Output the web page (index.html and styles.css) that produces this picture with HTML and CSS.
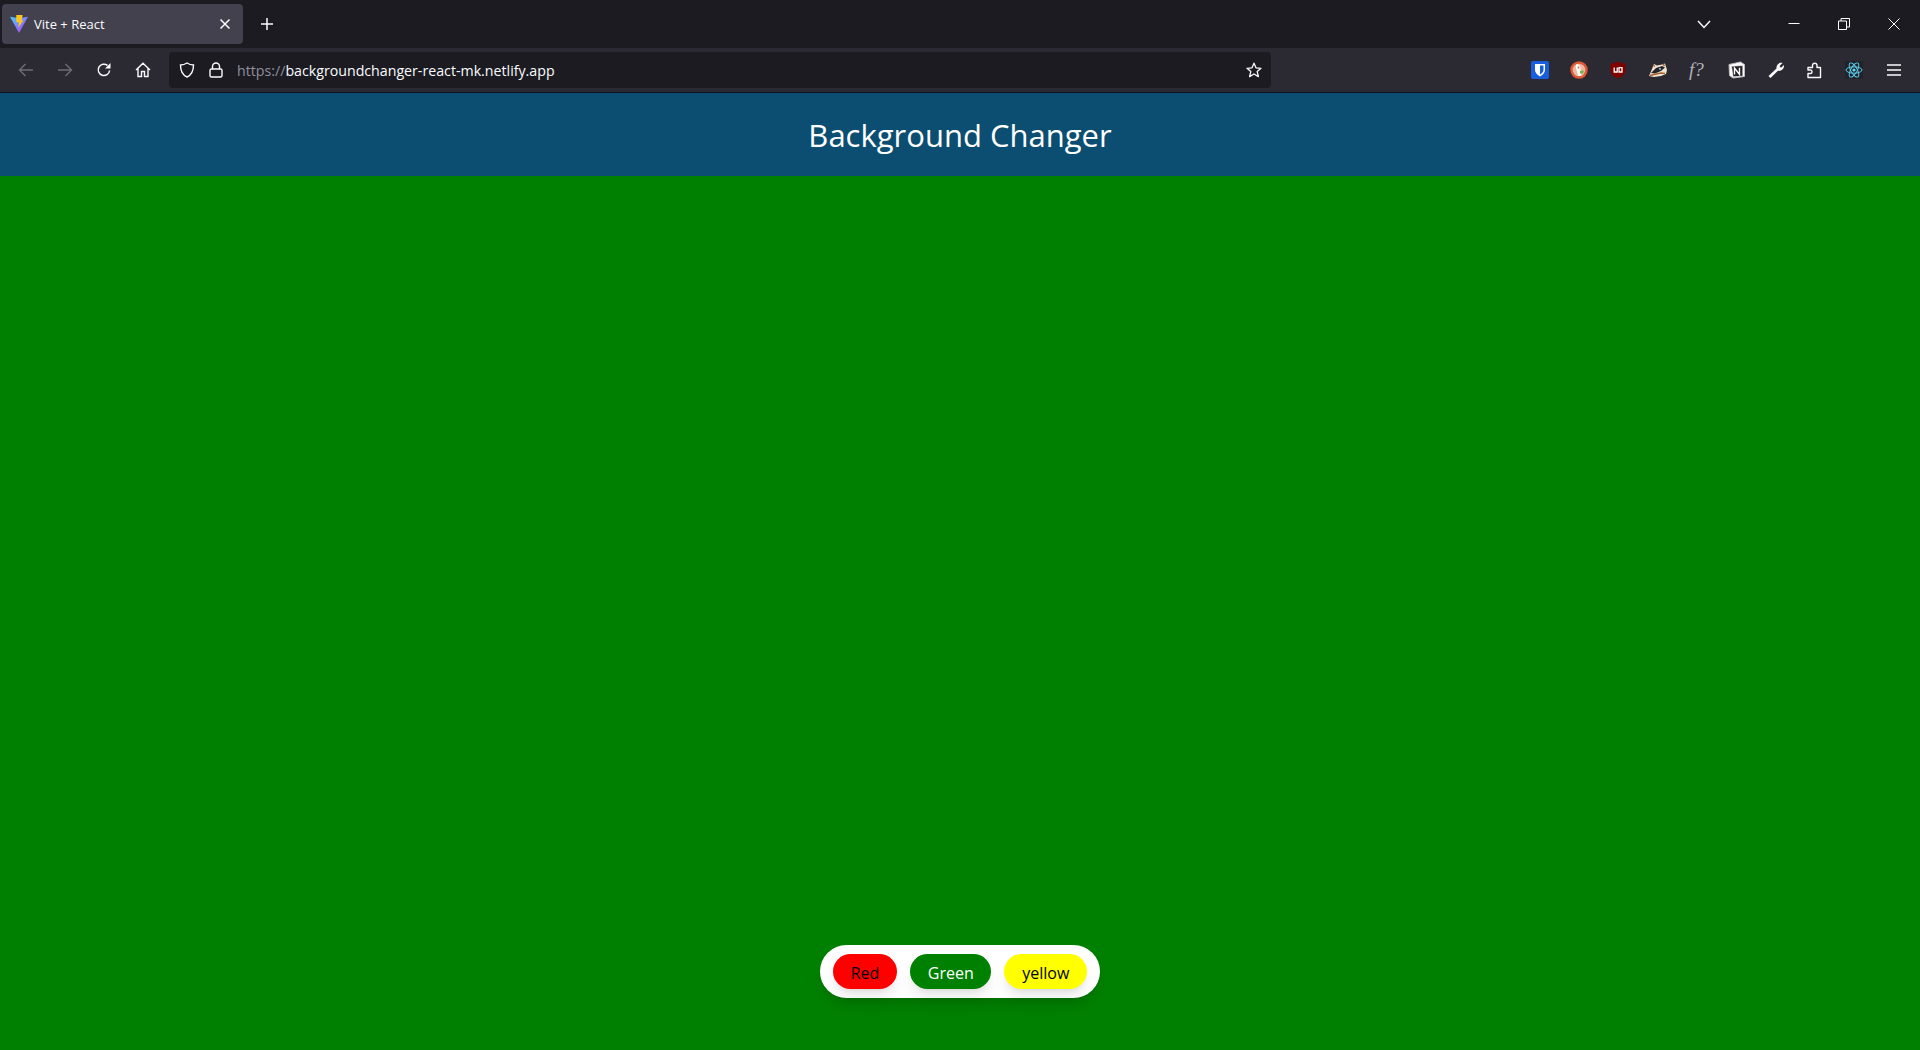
FILE: index.html
```html
<!DOCTYPE html>
<html lang="en">
<head>
    <meta charset="UTF-8">
    <title>Vite + React</title>
    <link rel="stylesheet" href="styles.css">
</head>
<body>
<div class="tabbar">
    <div class="tab">
        <svg class="favicon" viewBox="0 0 20 20" width="18" height="18">
            <defs>
                <linearGradient id="viteBlue" x1="0" y1="0" x2="1" y2="1">
                    <stop offset="0" stop-color="#41d1ff"/>
                    <stop offset="1" stop-color="#bd34fe"/>
                </linearGradient>
            </defs>
            <path d="M0 2 L7 3 L13 3 L20 2 L10 20 Z" fill="url(#viteBlue)"/>
            <path d="M7 0 L14 0 L13 6 L15 6 L9 14 L10 8 L7 8 Z" fill="#ffc517"/>
        </svg>
        <span class="tab-title">Vite + React</span>
        <svg class="tab-close" viewBox="0 0 12 12" width="12" height="12">
            <path d="M1.5 1.5 L10.5 10.5 M10.5 1.5 L1.5 10.5" stroke="#fbfbfe" stroke-width="1.5" fill="none"/>
        </svg>
    </div>
    <svg class="new-tab" viewBox="0 0 14 14" width="14" height="14">
        <path d="M7 1 V13 M1 7 H13" stroke="#fbfbfe" stroke-width="1.5" fill="none"/>
    </svg>
    <div class="spacer"></div>
    <svg class="tab-list" viewBox="0 0 14 9" width="14" height="9">
        <path d="M1 1 L7 7.5 L13 1" stroke="#fbfbfe" stroke-width="1.5" fill="none"/>
    </svg>
    <div class="window-controls">
        <svg viewBox="0 0 12 12" width="12" height="12"><path d="M0.5 5.5 H11.5" stroke="#fff" fill="none"/></svg>
        <svg viewBox="0 0 12 12" width="12" height="12"><path d="M0.5 3 H8.5 V11.5 H0.5 Z M3 3 V0.5 H11.5 V9 H8.5" stroke="#fff" fill="none"/></svg>
        <svg viewBox="0 0 12 12" width="12" height="12"><path d="M0.5 0.5 L11.5 11.5 M11.5 0.5 L0.5 11.5" stroke="#fff" fill="none"/></svg>
    </div>
</div>
<div class="toolbar">
    <div class="nav-btn">
        <svg viewBox="0 0 16 16" width="16" height="16"><path d="M15 8 H1.5 M7.5 2 L1.5 8 L7.5 14" stroke="#6e6d75" stroke-width="1.4" fill="none"/></svg>
    </div>
    <div class="nav-btn">
        <svg viewBox="0 0 16 16" width="16" height="16"><path d="M1 8 H14.5 M8.5 2 L14.5 8 L8.5 14" stroke="#6e6d75" stroke-width="1.4" fill="none"/></svg>
    </div>
    <div class="nav-btn">
        <svg viewBox="0 0 16 16" width="16" height="16"><path d="M13.6 8.5 A5.7 5.7 0 1 1 11.5 3.4" stroke="#fbfbfe" stroke-width="1.5" fill="none"/><path d="M14.5 1 V6.5 H9 Z" fill="#fbfbfe"/></svg>
    </div>
    <div class="nav-btn">
        <svg viewBox="0 0 16 16" width="16" height="16"><path d="M1 8 L8 1.2 L15 8 M3 6.5 V14.5 H6.5 V9.5 H9.5 V14.5 H13 V6.5" stroke="#fbfbfe" stroke-width="1.4" fill="none"/></svg>
    </div>
    <div class="urlbar">
        <svg class="url-icon" viewBox="0 0 16 16" width="16" height="16"><path d="M8 1 C10 2.3 12 3 14.5 3 C14.5 9 12.5 13 8 15 C3.5 13 1.5 9 1.5 3 C4 3 6 2.3 8 1 Z" stroke="#fbfbfe" stroke-width="1.4" fill="none"/></svg>
        <svg class="url-icon" viewBox="0 0 16 16" width="16" height="16"><rect x="2" y="7" width="12" height="8" rx="1.5" stroke="#fbfbfe" stroke-width="1.4" fill="none"/><path d="M4.5 7 V4.5 A3.5 3.5 0 0 1 11.5 4.5 V7" stroke="#fbfbfe" stroke-width="1.4" fill="none"/></svg>
        <span class="url"><span class="url-scheme">https://</span>backgroundchanger-react-mk.netlify.app</span>
        <svg class="star" viewBox="0 0 16 16" width="16" height="16"><path d="M8 1.2 L10 5.8 L15 6.3 L11.2 9.6 L12.4 14.6 L8 12 L3.6 14.6 L4.8 9.6 L1 6.3 L6 5.8 Z" stroke="#fbfbfe" stroke-width="1.3" stroke-linejoin="round" fill="none"/></svg>
    </div>
    <div class="spacer"></div>
    <div class="ext-icons">
        <svg viewBox="0 0 18 18" width="18" height="18"><rect width="18" height="18" rx="2" fill="#175ddc"/><path d="M4 3 H14 V9 C14 12 11.5 14 9 15.5 C6.5 14 4 12 4 9 Z" fill="#fff"/><path d="M9 4.5 H12.5 V9 C12.5 11 10.5 12.5 9 13.5 Z" fill="#175ddc"/></svg>
        <svg viewBox="0 0 18 18" width="18" height="18"><circle cx="9" cy="9" r="8.7" fill="#de5833"/><circle cx="9" cy="9" r="6.3" fill="#f0b49f"/><path d="M6 3.5 C9 2.8 11 5 10.5 9 L11.5 15 H8 C8 11 5 8 6 3.5 Z" fill="#fff"/><path d="M10 10 L14 9.5 L13 12.5 L10 12.5 Z" fill="#65bc46"/><circle cx="8.5" cy="6.5" r="0.9" fill="#de5833"/></svg>
        <svg viewBox="0 0 18 18" width="18" height="18"><path d="M9 0.5 C11.5 2 14 2.5 16.5 2.5 V9 C16.5 13 13 16 9 17.5 C5 16 1.5 13 1.5 9 V2.5 C4 2.5 6.5 2 9 0.5 Z" fill="#800000"/><path d="M5.2 6.5 V11 H8.2 V6.5 M10 6.7 H13 V11 H10 Z" stroke="#fff" stroke-width="1.3" fill="none"/></svg>
        <svg viewBox="0 0 20 18" width="20" height="18"><path d="M1 15 L4 8 L6 3 L9 4.5 L14 3.5 L17 2.5 L19 9 L18 13 L13 15 L6 16 Z" fill="#f0e4d2"/><path d="M3 12 L8 7 L14 5 L17 6.5 L13 10 L7 12.5 Z" fill="#26232a"/><path d="M2 14.5 L6 13.5 L13 12 L17 12.5 M5 4 L7 5.5 M15 3 L16.5 5" stroke="#a8622c" stroke-width="1.4" fill="none"/><circle cx="12" cy="7.8" r="1.1" fill="#8fb3c9"/></svg>
        <span class="font-finder">f?</span>
        <svg viewBox="0 0 18 18" width="18" height="18"><path d="M1 3.5 L12.5 1 L16.5 3.5 V15.5 L5 17 L1.5 14.5 Z" fill="#fff" stroke="#bbb" stroke-width="1"/><path d="M3.5 5.2 L14.8 4.5 V15.2 L5 15.8 Z" fill="#26232a" stroke="#fff" stroke-width="0.6"/><path d="M6.5 13.5 V7 L11.5 13.5 V6.7" stroke="#fff" stroke-width="1.4" fill="none"/></svg>
        <svg viewBox="0 0 18 18" width="18" height="18"><path d="M1.5 15 L9.5 7.5 C9 4 12 1 15.5 2 L12.5 5 L14 6.8 L17 4 C17.5 8 14 10.5 11 9.8 L3.5 17 Z" fill="#fbfbfe"/></svg>
        <svg viewBox="0 0 18 18" width="18" height="18"><path d="M2 6.5 H6.5 V4 A2.3 2.3 0 0 1 11 4 V6.5 H14.5 V16.5 H2 V12.5 H5 A2 2 0 0 0 5 9 H2 Z" stroke="#fbfbfe" stroke-width="1.4" stroke-linejoin="round" fill="none"/></svg>
        <svg class="react-icon" viewBox="0 0 18 18" width="18" height="18"><rect width="18" height="18" fill="#20232a"/><g stroke="#61dafb" stroke-width="0.9" fill="none"><ellipse cx="9" cy="9" rx="8" ry="3.2"/><ellipse cx="9" cy="9" rx="8" ry="3.2" transform="rotate(60 9 9)"/><ellipse cx="9" cy="9" rx="8" ry="3.2" transform="rotate(120 9 9)"/></g><circle cx="9" cy="9" r="1.6" fill="#61dafb"/></svg>
        <svg class="menu-icon" viewBox="0 0 16 14" width="16" height="14"><path d="M1 2 H15 M1 7 H15 M1 12 H15" stroke="#fbfbfe" stroke-width="1.5" fill="none"/></svg>
    </div>
</div>
<div class="page">
    <h1 class="page-title">Background Changer</h1>
    <main class="canvas">
        <div class="color-picker">
            <button class="color-btn red">Red</button>
            <button class="color-btn green">Green</button>
            <button class="color-btn yellow">yellow</button>
        </div>
    </main>
</div>
</body>
</html>
```

FILE: styles.css
```css
html, body {
    height: 100%;
    margin: 0;
    padding: 0;
    overflow: hidden;
}

body {
    display: flex;
    flex-direction: column;
    font-family: "Open Sans", "Noto Sans", sans-serif;
    background-color: green;
}

svg {
    display: block;
    flex: none;
}

.spacer {
    flex: 1;
}

/* browser chrome */
.tabbar {
    display: flex;
    align-items: center;
    height: 48px;
    background-color: #1c1b22;
    color: #fbfbfe;
}

.tab {
    display: flex;
    align-items: center;
    width: 241px;
    height: 40px;
    margin-left: 2px;
    margin-top: -1px;
    padding: 0 12px 0 8px;
    box-sizing: border-box;
    background-color: #42414d;
    border-radius: 4px;
}

.favicon {
    margin-right: 6px;
}

.tab-title {
    flex: 1;
    font-size: 13px;
}

.new-tab {
    margin-left: 17px;
}

.tab-list {
    margin-right: 77px;
}

.window-controls {
    display: flex;
    gap: 38px;
    margin-right: 20px;
}

.toolbar {
    display: flex;
    align-items: center;
    height: 44px;
    background-color: #2b2a33;
    border-bottom: 1px solid #0f1126;
    box-sizing: content-box;
}

.nav-btn {
    width: 39px;
    display: flex;
    justify-content: center;
}

.nav-btn:first-child {
    margin-left: 6px;
}

.urlbar {
    display: flex;
    align-items: center;
    width: 1102px;
    height: 36px;
    margin-left: 7px;
    padding: 0 9px 0 10px;
    box-sizing: border-box;
    background-color: #1c1b22;
    border-radius: 4px;
}

.url-icon {
    margin-right: 13px;
}

.url {
    flex: 1;
    font-size: 14.2px;
    color: #fbfbfe;
    white-space: nowrap;
}

.url-scheme {
    color: #8f8f9d;
}

.ext-icons {
    display: flex;
    align-items: center;
    gap: 21px;
    margin-right: 18px;
}

.menu-icon {
    margin-left: 2px;
}

.font-finder {
    width: 18px;
    font-family: "Liberation Serif", serif;
    font-style: italic;
    font-size: 19px;
    color: #b0b0b6;
    white-space: nowrap;
}

/* page */
.page {
    flex: 1;
    display: flex;
    flex-direction: column;
}

.page-title {
    margin: 0;
    height: 83px;
    line-height: 85px;
    text-align: center;
    font-size: 31px;
    font-weight: 400;
    color: #fff;
    background-color: #0c4e72;
}

.canvas {
    flex: 1;
    display: flex;
    justify-content: center;
    align-items: flex-end;
    padding-bottom: 52px;
    background-color: green;
}

.color-picker {
    display: flex;
    gap: 13px;
    padding: 9px 13px;
    background-color: #fff;
    border-radius: 27px;
    box-shadow: 0 10px 15px -3px rgba(0, 0, 0, 0.1), 0 4px 6px -4px rgba(0, 0, 0, 0.1);
}

.color-btn {
    height: 35px;
    padding: 2px 18px 0;
    border: none;
    border-radius: 18px;
    font-family: inherit;
    font-size: 16px;
    box-shadow: 0 10px 15px -3px rgba(0, 0, 0, 0.1), 0 4px 6px -4px rgba(0, 0, 0, 0.1);
}

.red {
    background-color: red;
    color: #000;
}

.green {
    padding-left: 17.5px;
    padding-right: 17.5px;
    background-color: green;
    color: #fff;
}

.yellow {
    background-color: yellow;
    color: #000;
}
```
